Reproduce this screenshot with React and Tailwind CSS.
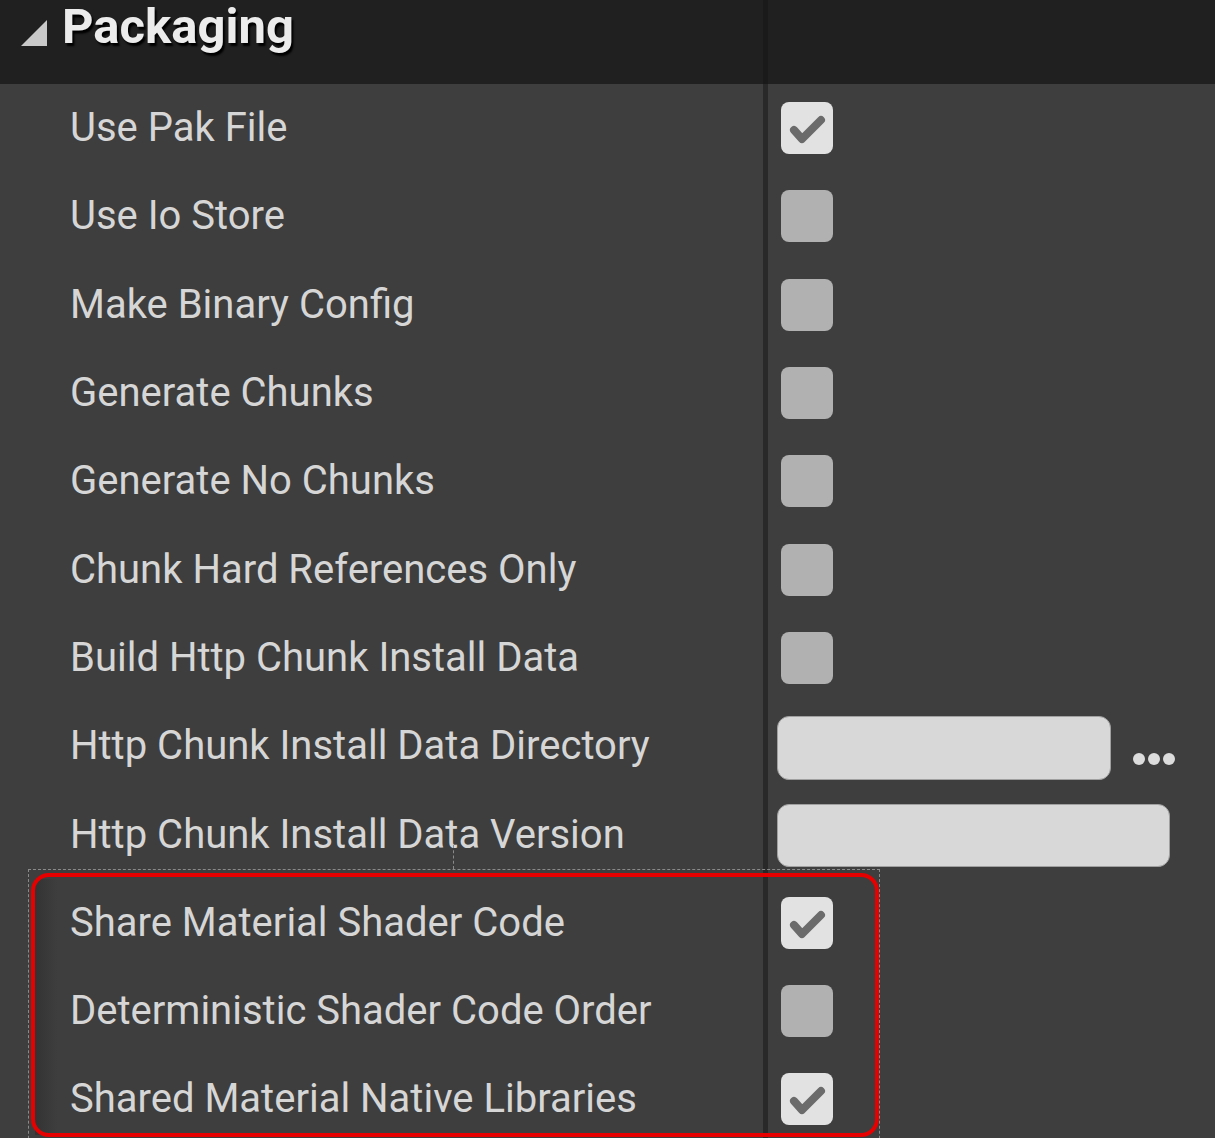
import React from 'react';

const rows = [
  { label: 'Use Pak File', type: 'check', on: true },
  { label: 'Use Io Store', type: 'check' },
  { label: 'Make Binary Config', type: 'check' },
  { label: 'Generate Chunks', type: 'check' },
  { label: 'Generate No Chunks', type: 'check' },
  { label: 'Chunk Hard References Only', type: 'check' },
  { label: 'Build Http Chunk Install Data', type: 'check' },
  { label: 'Http Chunk Install Data Directory', type: 'path' },
  { label: 'Http Chunk Install Data Version', type: 'text' },
];

const marked = [
  { label: 'Share Material Shader Code', type: 'check', on: true },
  { label: 'Deterministic Shader Code Order', type: 'check' },
  { label: 'Shared Material Native Libraries', type: 'check', on: true },
];

function Checkbox({ on }) {
  if (!on) return <div className="ml-[13px] h-[52px] w-[52px] rounded-[8px] bg-[#b1b1b1]" />;
  return (
    <div className="ml-[13px] h-[52px] w-[52px] rounded-[8px] bg-[#e2e2e2]">
      <svg width="52" height="52" viewBox="0 0 52 52">
        <path d="M13 28 L21 37 L40 18" fill="none" stroke="#6b6b6b" strokeWidth="8" strokeLinecap="round" strokeLinejoin="round" />
      </svg>
    </div>
  );
}

function Value({ row }) {
  if (row.type === 'check') return <Checkbox on={row.on} />;
  if (row.type === 'path') {
    return (
      <div className="ml-[9px] flex items-center">
        <div className="mt-[4px] h-[64px] w-[334px] rounded-[12px] border border-[#a0a0a0] bg-[#d8d8d8]" />
        <div className="ml-[22px] mt-[26px] flex gap-[3px]">
          <span className="h-[12px] w-[12px] rounded-full bg-[#dcdcdc]" />
          <span className="h-[12px] w-[12px] rounded-full bg-[#dcdcdc]" />
          <span className="h-[12px] w-[12px] rounded-full bg-[#dcdcdc]" />
        </div>
      </div>
    );
  }
  return <div className="ml-[9px] mt-[2px] h-[63px] w-[393px] rounded-[12px] border border-[#a0a0a0] bg-[#d8d8d8]" />;
}

function Row({ row }) {
  return (
    <div className="flex h-[88.3px]">
      <div className="flex w-[763px] items-center pl-[70px] text-[40px] text-[#d6d6d6]">{row.label}</div>
      <div className="w-[5px] bg-[#292929]" />
      <div className="flex flex-1 items-center">
        <Value row={row} />
      </div>
    </div>
  );
}

export default function App() {
  return (
    <div className="h-[1138px] w-[1215px] overflow-hidden bg-[#3e3e3e]" style={{ fontFamily: 'Roboto, "Noto Sans", sans-serif' }}>
      <div className="flex h-[84px] bg-[#202020]">
        <div className="flex w-[763px] items-start pt-[1px]">
          <svg className="ml-[20px] mt-[18px]" width="28" height="28" viewBox="0 0 28 28">
            <path d="M27 1 L27 27 L1 27 Z" fill="#c9c9c9" />
          </svg>
          <span className="ml-[14px] text-[49px] font-bold leading-[52px] text-[#ececec] [text-shadow:2px_3px_2px_#000]">Packaging</span>
        </div>
        <div className="w-[5px] bg-[#1a1a1a]" />
      </div>
      {rows.map((r) => (
        <Row key={r.label} row={r} />
      ))}
      <div className="relative">
        <div className="pointer-events-none absolute left-[453px] top-[-34px] h-[24px] border-l border-dashed border-[#8a8a8a]" />
        <div className="pointer-events-none absolute left-[28px] top-[-10px] h-[300px] w-[852px] border border-dashed border-[#8a8a8a]" />
        <div className="pointer-events-none absolute left-[35px] top-[0px] h-[256px] w-[22px] bg-gradient-to-r from-[#333333] to-transparent" />
        {marked.map((r) => (
          <Row key={r.label} row={r} />
        ))}
        <div className="pointer-events-none absolute left-[31px] top-[-6px] h-[264px] w-[848px] rounded-[18px] border-[4px] border-[#e60000]" />
      </div>
    </div>
  );
}
